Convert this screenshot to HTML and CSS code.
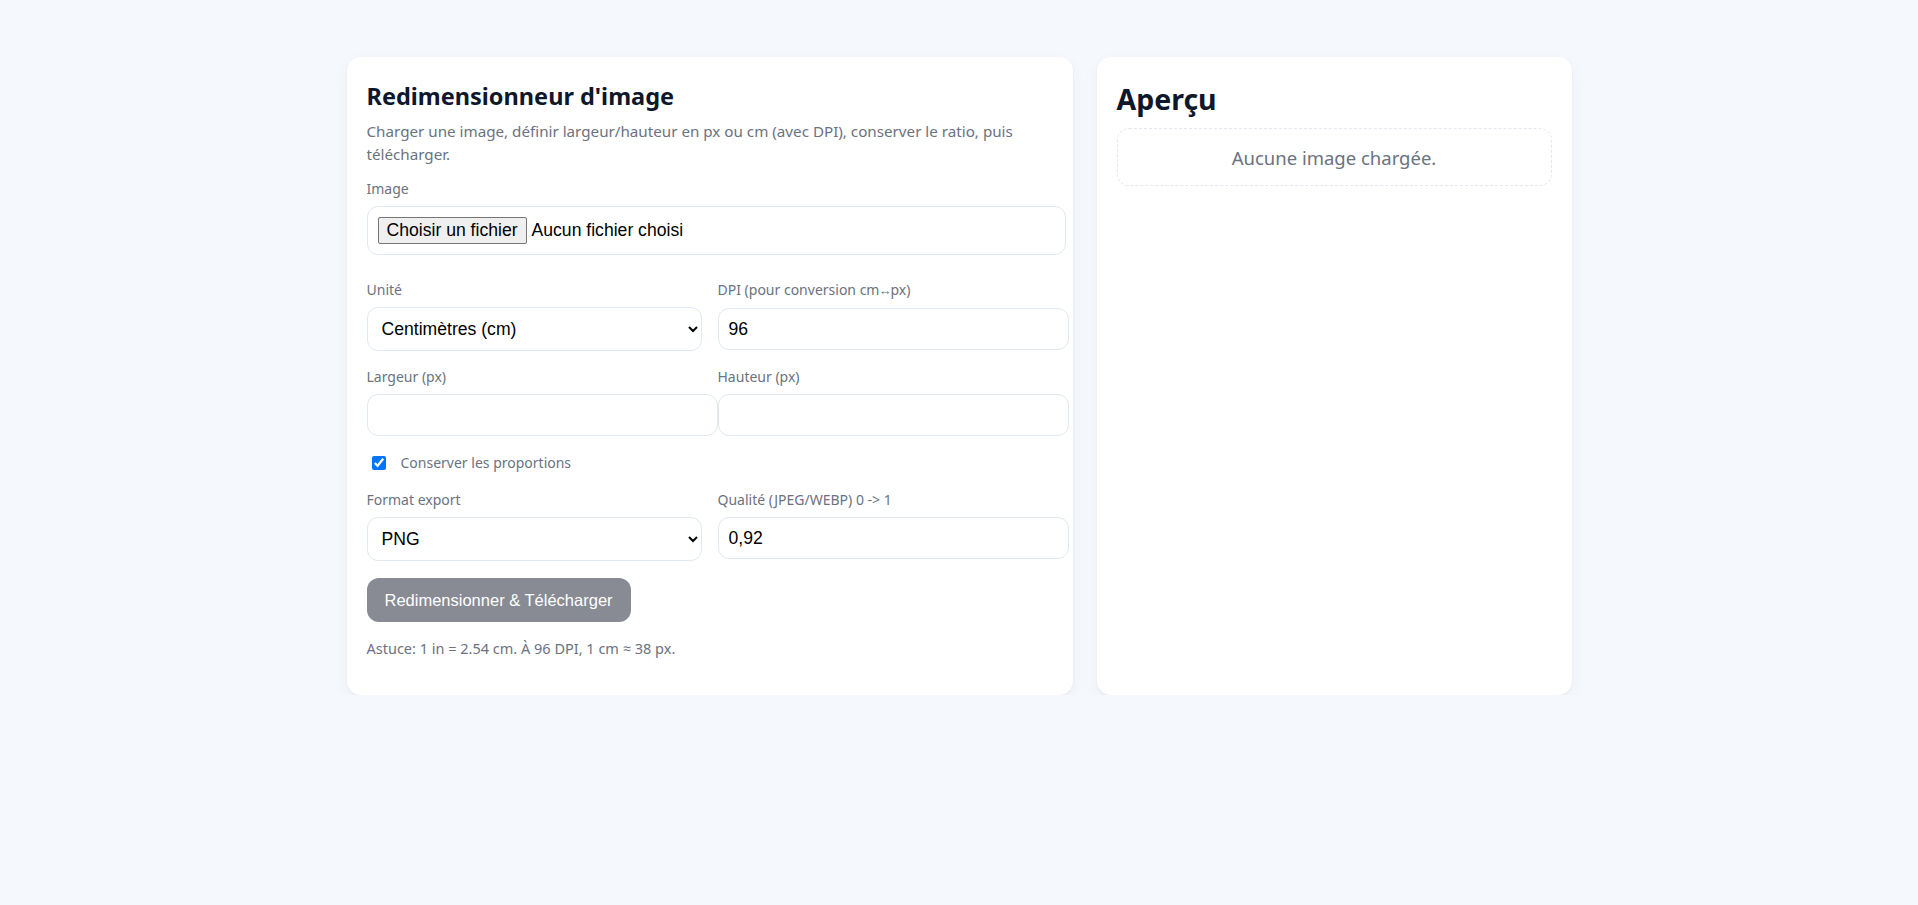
FILE: index.html
```html
<!DOCTYPE html>
<html lang="fr">
<head>
<meta charset="utf-8">
<title>Redimensionneur d'image</title>
<link rel="stylesheet" href="styles.css">
</head>
<body>
<main class="layout">
  <section class="card card-form">
    <h1 class="title">Redimensionneur d'image</h1>
    <p class="lead">Charger une image, définir largeur/hauteur en px ou cm (avec DPI), conserver le ratio, puis télécharger.</p>
    <label class="field-label">Image</label>
    <div class="file-box"><span class="file-btn">Choisir un fichier</span><span class="file-name">Aucun fichier choisi</span></div>

    <div class="grid2 row-a">
      <div class="field">
        <label class="field-label">Unité</label>
        <select class="control select"><option>Centimètres (cm)</option><option>Pixels (px)</option></select>
      </div>
      <div class="field">
        <label class="field-label">DPI (pour conversion cm<span class="arrow">↔</span>px)</label>
        <input class="control input" type="text" value="96">
      </div>
    </div>

    <div class="grid2 row-b">
      <div class="field">
        <label class="field-label">Largeur (px)</label>
        <input class="control input" type="text" value="">
      </div>
      <div class="field">
        <label class="field-label">Hauteur (px)</label>
        <input class="control input" type="text" value="">
      </div>
    </div>

    <label class="check-row"><input class="check" type="checkbox" checked><span>Conserver les proportions</span></label>

    <div class="grid2 row-c">
      <div class="field">
        <label class="field-label">Format export</label>
        <select class="control select"><option>PNG</option><option>JPEG</option><option>WEBP</option></select>
      </div>
      <div class="field">
        <label class="field-label">Qualité (JPEG/WEBP) 0 -&gt; 1</label>
        <input class="control input" type="text" value="0,92">
      </div>
    </div>

    <button class="btn" type="button" disabled>Redimensionner &amp; Télécharger</button>

    <p class="hint">Astuce: 1 in = 2.54 cm. À 96 DPI, 1 cm ≈ 38 px.</p>
  </section>

  <section class="card card-preview">
    <h2 class="preview-title">Aperçu</h2>
    <div class="empty">Aucune image chargée.</div>
  </section>
</main>
</body>
</html>
```

FILE: styles.css
```css
* { box-sizing: border-box; }

html, body {
  margin: 0;
  padding: 0;
  background: #f5f8fd;
}

body {
  font-family: "Noto Sans", "Open Sans", sans-serif;
  color: #0f172a;
}

.layout {
  display: grid;
  grid-template-columns: 726px 475px;
  column-gap: 24px;
  justify-content: center;
  align-items: stretch;
  padding-top: 57px;
}

.card {
  background: #ffffff;
  border-radius: 14px;
  box-shadow: 0 1px 3px rgba(15, 23, 42, 0.05), 0 6px 18px rgba(15, 23, 42, 0.04);
}

.card-form {
  padding: 23px 20px 20px;
}

.title {
  margin: 0 0 7.5px;
  font-size: 23.5px;
  line-height: 32px;
  font-weight: 700;
  color: #0f172a;
}

.lead {
  margin: 0 0 13.5px;
  font-size: 15.2px;
  line-height: 23px;
  color: #6b7280;
}

.field-label {
  display: block;
  margin: 0 0 7px;
  font-size: 14px;
  line-height: 20px;
  color: #6b7280;
}

.arrow {
  font-family: "Liberation Sans", Arial, sans-serif;
  font-size: 13px;
  margin: 0 -1px;
}

.file-box {
  display: flex;
  align-items: center;
  width: calc(100% + 13.5px);
  height: 49px;
  padding: 0 10px;
  border: 1px solid #e2e8f0;
  border-radius: 11px;
  font-family: "Liberation Sans", Arial, sans-serif;
  font-size: 17.6px;
  color: #000;
}

.file-btn {
  display: inline-flex;
  align-items: center;
  height: 27px;
  padding: 0 8px;
  margin-right: 5px;
  background: #efefef;
  border: 1px solid #767676;
  border-radius: 2px;
  color: #000;
}

.grid2 {
  display: grid;
  grid-template-columns: 1fr 1fr;
  column-gap: 16px;
}

.row-a { margin-top: 25px; }
.row-b { margin-top: 16px; }
.row-c { margin-top: 17.5px; }

.field { min-width: 0; }

.control {
  display: block;
  margin: 0;
  border: 1px solid #e2e8f0;
  border-radius: 11px;
  background: #ffffff;
  font-family: "Liberation Sans", Arial, sans-serif;
  font-size: 17.6px;
  color: #000;
}

.select {
  width: 100%;
  height: 43.5px;
  padding: 0 8px 0 10px;
}

.input {
  width: calc(100% + 16px);
  height: 42px;
  padding: 0 10px;
  outline: none;
}

.check-row {
  display: flex;
  align-items: center;
  height: 20px;
  margin-top: 17px;
  font-size: 14px;
  color: #6b7280;
}

.check {
  width: 14px;
  height: 14px;
  margin: 0 15px 0 5px;
  accent-color: #0075ff;
}

.btn {
  display: block;
  margin-top: 17.5px;
  height: 44.4px;
  padding: 0 18px;
  border: 0;
  border-radius: 12px;
  background: #888b93;
  color: #ffffff;
  font-family: "Liberation Sans", Arial, sans-serif;
  font-size: 16.5px;
}

.hint {
  margin: 15.5px 0 17px;
  font-size: 14.5px;
  line-height: 20px;
  color: #6b7280;
}

.card-preview {
  padding: 20px;
}

.preview-title {
  margin: 6px 0 11.5px;
  font-size: 28.5px;
  line-height: 33.6px;
  font-weight: 700;
  color: #0f172a;
}

.empty {
  padding: 16px 15px 14px;
  border: 1px dashed #e2e8f0;
  border-radius: 12px;
  text-align: center;
  font-size: 18.5px;
  line-height: 26px;
  color: #6b7280;
}
```
